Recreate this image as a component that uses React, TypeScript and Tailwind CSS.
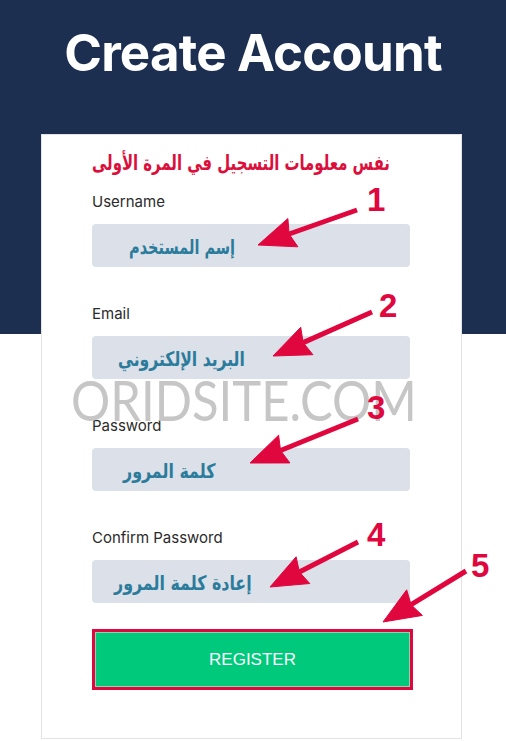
import React, { useLayoutEffect, useRef, useState } from "react";

const arabic = { fontFamily: '"DejaVu Sans", "Noto Sans", sans-serif' };
const latin = { fontFamily: 'Inter, "Noto Sans", sans-serif' };

const fields = [
  { label: "Username", hint: "إسم المستخدم", left: 37, width: 106 },
  { label: "Email", hint: "البريد الإلكتروني", left: 26, width: 127 },
  { label: "Password", hint: "كلمة المرور", left: 31, width: 92 },
  { label: "Confirm Password", hint: "إعادة كلمة المرور", left: 22, width: 138 },
];

// callouts drawn over the form: tail -> tip, number position
const callouts = [
  { n: "1", x1: 357, y1: 210, x2: 258, y2: 245, nx: 367, ny: 211 },
  { n: "2", x1: 372, y1: 312, x2: 273, y2: 356, nx: 379, ny: 317 },
  { n: "3", x1: 358, y1: 419, x2: 250, y2: 463, nx: 367, ny: 419 },
  { n: "4", x1: 358, y1: 542, x2: 270, y2: 587, nx: 367, ny: 546 },
  { n: "5", x1: 466, y1: 571, x2: 383, y2: 622, nx: 471, ny: 577 },
];

// squeeze arabic text to the width it has in the screenshot
function FitText({ text, width, className }: { text: string; width: number; className?: string }) {
  const ref = useRef<HTMLSpanElement>(null);
  const [scale, setScale] = useState(1);
  useLayoutEffect(() => {
    if (ref.current) setScale(width / ref.current.offsetWidth);
  }, [text, width]);
  return (
    <span className="block" style={{ width }}>
      <span
        ref={ref}
        dir="rtl"
        className={"inline-block whitespace-nowrap origin-left " + (className ?? "")}
        style={{ ...arabic, transform: `scaleX(${scale})` }}
      >
        {text}
      </span>
    </span>
  );
}

function Arrow({ x1, y1, x2, y2 }: { x1: number; y1: number; x2: number; y2: number }) {
  const len = Math.hypot(x2 - x1, y2 - y1);
  const ux = (x2 - x1) / len;
  const uy = (y2 - y1) / len;
  const px = -uy;
  const py = ux;
  const h = 37;
  const w = 15;
  const bx = x2 - ux * h;
  const by = y2 - uy * h;
  const nx = x2 - ux * (h - 4);
  const ny = y2 - uy * (h - 4);
  const pts = [
    [x2, y2],
    [bx + px * w, by + py * w],
    [nx, ny],
    [bx - px * w, by - py * w],
  ]
    .map((p) => p.join(","))
    .join(" ");
  return (
    <g fill="#e0063e" stroke="#e0063e">
      <line x1={x1} y1={y1} x2={nx} y2={ny} strokeWidth={5} />
      <polygon points={pts} strokeWidth={1} strokeLinejoin="round" />
    </g>
  );
}

export default function App() {
  return (
    <div className="relative w-full h-[741px] bg-white overflow-hidden">
      <div className="h-[334px] bg-[#1c2f51] pt-[23px]">
        <h1
          className="text-center text-white font-bold text-[51px] leading-[60px] tracking-[-0.8px]"
          style={latin}
        >
          Create Account
        </h1>
      </div>

      <div className="relative -mt-[200px] ml-[41px] w-[421px] h-[605px] bg-white border border-[#e3e3e3] pt-[13px] pl-[50px]">
        <div className="h-[30px] flex items-center">
          <FitText
            text="نفس معلومات التسجيل في المرة الأولى"
            width={298}
            className="text-[#dc0f3c] font-bold text-[21px] leading-[30px]"
          />
        </div>

        <div className="mt-[14px] flex flex-col gap-[37px] w-[318px]">
          {fields.map((f) => (
            <div key={f.label}>
              <div className="text-[15px] leading-[20px] text-[#2b2b2b]" style={latin}>
                {f.label}
              </div>
              <div className="mt-[12px] h-[43px] rounded-[4px] bg-[#dbe0e9] flex items-center pt-[3px]">
                <span className="block" style={{ marginLeft: f.left }}>
                  <FitText text={f.hint} width={f.width} className="font-bold text-[20px] text-[#2b7b9b]" />
                </span>
              </div>
            </div>
          ))}
        </div>

        <button
          className="mt-[26px] w-[321px] h-[61px] border-[3px] border-[#e0063e] bg-[#00c97b] text-white text-[17px] shadow-[inset_0_0_0_1px_#8fd3b4]"
          style={{ fontFamily: '"Liberation Sans", Arial, sans-serif' }}
        >
          REGISTER
        </button>
      </div>

      <div
        className="absolute left-[71px] top-[372px] text-[56px] leading-[56px] text-[#c6c6c6] origin-left scale-x-[0.875] pointer-events-none"
        style={{ fontFamily: 'Lato, "Open Sans", sans-serif' }}
      >
        ORIDSITE.COM
      </div>

      <svg className="absolute inset-0 pointer-events-none" width="506" height="741">
        {callouts.map((c) => (
          <g key={c.n}>
            <Arrow x1={c.x1} y1={c.y1} x2={c.x2} y2={c.y2} />
            <text
              x={c.nx}
              y={c.ny}
              fill="#e0063e"
              fontSize={33}
              fontWeight={700}
              fontFamily='"Liberation Sans Narrow", "Liberation Sans", sans-serif'
            >
              {c.n}
            </text>
          </g>
        ))}
      </svg>
    </div>
  );
}
